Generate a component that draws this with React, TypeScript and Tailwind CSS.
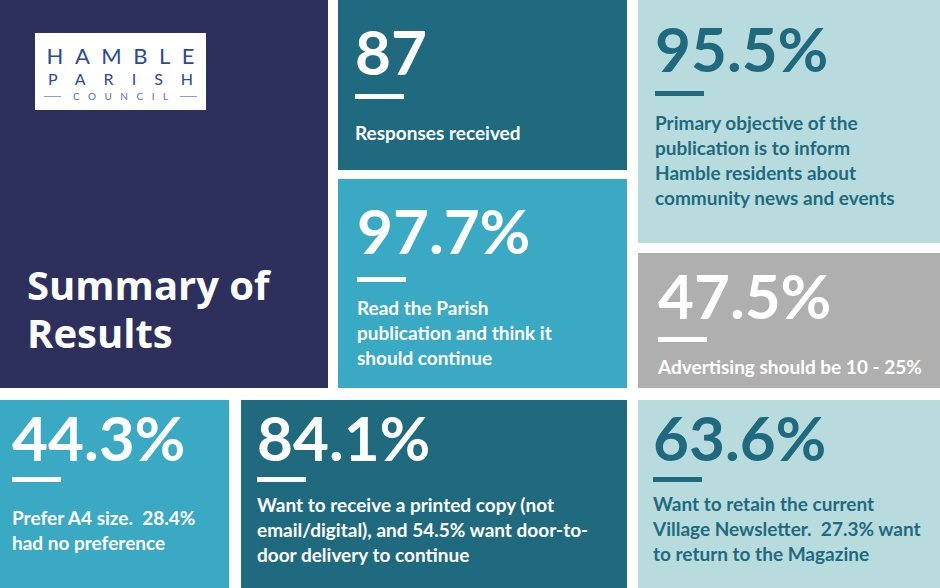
import React from 'react';

interface StatProps {
  value: string;
  lines: string[];
  tile: string;
  pad: string;
  bar: string;
  barGap: string;
  textGap: string;
}

const Stat: React.FC<StatProps> = ({ value, lines, tile, pad, bar, barGap, textGap }) => (
  <div className={`${tile} ${pad} flex flex-col`}>
    <div className="text-[62px] leading-none font-bold">{value}</div>
    <div className={`${bar} ${barGap} w-[49px] h-[5px]`} />
    <div className={`${textGap} text-[19px] leading-[25px] font-bold`}>
      {lines.map((l, i) => (
        <div key={i} className="whitespace-pre">{l}</div>
      ))}
    </div>
  </div>
);

const Logo = () => (
  <div className="w-[171px] h-[77px] bg-white flex flex-col items-center text-[#2b4998] font-[family-name:Lato,'Liberation_Sans',sans-serif] font-normal">
    <div className="mt-[12px] text-[22px] leading-[22px] tracking-[11.5px] pl-[11.5px]">HAMBLE</div>
    <div className="mt-[3px] text-[16px] leading-[17px] tracking-[18px] pl-[18px]">PARISH</div>
    <div className="mt-[4px] flex items-center gap-[3px] text-[#5a6fae]">
      <div className="w-[17px] h-px bg-[#8e9cc7]" />
      <div className="text-[10px] leading-[11px] tracking-[8.5px] pl-[8.5px]">COUNCIL</div>
      <div className="w-[17px] h-px bg-[#8e9cc7]" />
    </div>
  </div>
);

export default function App() {
  return (
    <div className="w-[940px] h-[588px] bg-white flex flex-col gap-[12px] overflow-hidden font-[family-name:Lato,'Liberation_Sans',sans-serif]">
      <div className="h-[388px] flex">
        <div className="w-[328px] bg-[#2d2f5c] flex flex-col justify-between pt-[33px] pl-[35px] pb-[31px]">
          <Logo />
          <div className="-ml-[8px] text-white font-[family-name:'Open_Sans',sans-serif] font-bold text-[40px] leading-[48px]">
            <div>Summary of</div>
            <div>Results</div>
          </div>
        </div>
        <div className="ml-[10px] w-[289px] flex flex-col gap-[9px]">
          <Stat
            value="87"
            lines={['Responses received']}
            tile="h-[170px] bg-[#1f6a7f] text-white"
            pad="pt-[20px] pl-[17px]"
            bar="bg-white"
            barGap="mt-[12px]"
            textGap="mt-[21px]"
          />
          <Stat
            value="97.7%"
            lines={['Read the Parish', 'publication and think it', 'should continue']}
            tile="flex-1 bg-[#39a9c4] text-white"
            pad="pt-[20px] pl-[19px]"
            bar="bg-white"
            barGap="mt-[16px]"
            textGap="mt-[13px]"
          />
        </div>
        <div className="ml-[11px] flex-1 flex flex-col gap-[10px]">
          <Stat
            value="95.5%"
            lines={[
              'Primary objective of the',
              'publication is to inform',
              'Hamble residents about',
              'community news and events',
            ]}
            tile="h-[243px] bg-[#b8dcde] text-[#1f6a7f]"
            pad="pt-[17px] pl-[17px]"
            bar="bg-[#1f6a7f]"
            barGap="mt-[12px]"
            textGap="mt-[14px]"
          />
          <Stat
            value="47.5%"
            lines={['Advertising should be 10 - 25%']}
            tile="flex-1 bg-[#afafaf] text-white"
            pad="pt-[11px] pl-[20px]"
            bar="bg-white"
            barGap="mt-[11px]"
            textGap="mt-[12px]"
          />
        </div>
      </div>
      <div className="flex-1 flex">
        <Stat
          value="44.3%"
          lines={['Prefer A4 size.  28.4%', 'had no preference']}
          tile="w-[229px] bg-[#39a9c4] text-white"
          pad="pt-[6px] pl-[12px]"
          bar="bg-white"
          barGap="mt-[9px]"
          textGap="mt-[23px]"
        />
        <Stat
          value="84.1%"
          lines={[
            'Want to receive a printed copy (not',
            'email/digital), and 54.5% want door-to-',
            'door delivery to continue',
          ]}
          tile="ml-[12px] w-[386px] bg-[#1f6a7f] text-white"
          pad="pt-[6px] pl-[16px]"
          bar="bg-white"
          barGap="mt-[9px]"
          textGap="mt-[10px]"
        />
        <Stat
          value="63.6%"
          lines={[
            'Want to retain the current',
            'Village Newsletter.  27.3% want',
            'to return to the Magazine',
          ]}
          tile="ml-[11px] flex-1 bg-[#b8dcde] text-[#1f6a7f]"
          pad="pt-[6px] pl-[15px]"
          bar="bg-[#1f6a7f]"
          barGap="mt-[9px]"
          textGap="mt-[9px]"
        />
      </div>
    </div>
  );
}
